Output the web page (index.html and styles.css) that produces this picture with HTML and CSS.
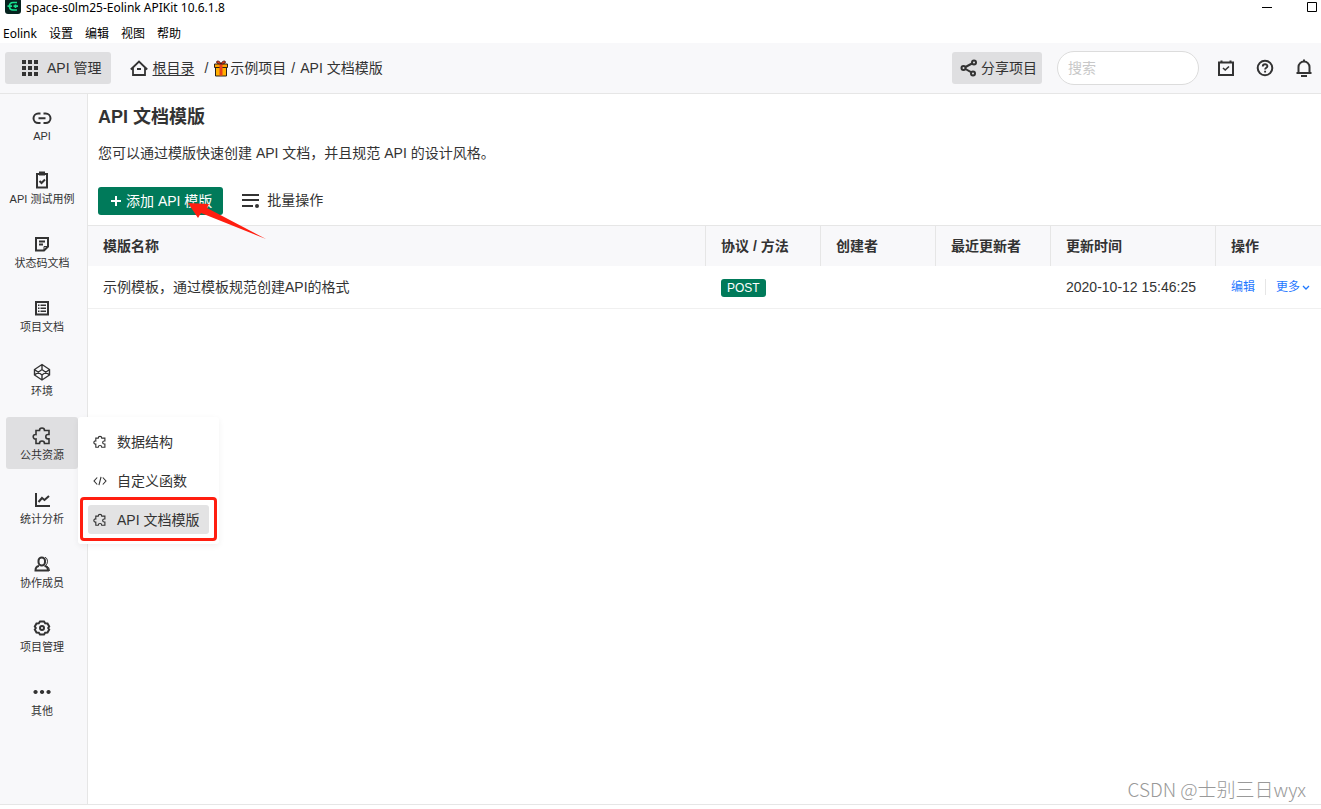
FILE: index.html
```html
<!DOCTYPE html>
<html lang="zh-CN">
<head>
<meta charset="utf-8">
<title>Eolink APIKit</title>
<link rel="stylesheet" href="styles.css">
</head>
<body>
<svg class="sprite" aria-hidden="true">
  <symbol id="puzzle" viewBox="0 0 20 20"><path d="M4 4.500h3.500a2.500 2.500 0 1 1 5 0H17V8.500h-1a2.200 2.200 0 0 0 0 4.400h1V17.500h-4.500a2.500 2.500 0 0 0-5 0H4V13a2.300 2.300 0 1 1 0-4.500z" fill="none" stroke="currentColor" stroke-width="1.600"/></symbol>
</svg>
<header class="titlebar">
  <svg class="logo" viewBox="0 0 16 16" aria-hidden="true"><rect width="16" height="16" y="-2" rx="3" fill="#06231f"/><path d="M12 2.500H8Q4.500 2.500 4.500 6.200T8 10h4M2.500 6.200H7M8.500 6.200H13M10.500 4.500V8" fill="none" stroke="#19e08f" stroke-width="1.700"/></svg>
  <span class="window-title">space-s0lm25-Eolink APIKit 10.6.1.8</span>
  <div class="window-controls">
    <button class="window-button" aria-label="最小化"><svg width="12" height="12"><path d="M1 6.500h10" stroke="#000"/></svg></button>
    <button class="window-button" aria-label="最大化"><svg width="12" height="12"><path d="M1.500 1.500h9v9h-9z" fill="none" stroke="#000"/></svg></button>
  </div>
</header>
<nav class="menubar" aria-label="菜单">
  <button>Eolink</button><button>设置</button><button>编辑</button><button>视图</button><button>帮助</button>
</nav>
<div class="topbar">
  <button class="app-button"><svg width="18" height="18" fill="#333"><path d="M1 1h4v4H1zM7 1h4v4H7zM13 1h4v4h-4zM1 7h4v4H1zM7 7h4v4H7zM13 7h4v4h-4zM1 13h4v4H1zM7 13h4v4H7zM13 13h4v4h-4z"/></svg>API 管理</button>
  <nav class="breadcrumb" aria-label="路径">
    <svg width="18" height="18"><path d="M.8 10.500 9 2.500l8.200 8M3 9v7h12V9M7 10h4" fill="none" stroke="#333" stroke-width="1.800"/></svg>
    <a href="#root">根目录</a>
    <span class="slash">/</span>
    <svg class="gift" viewBox="0 0 14 17"><path d="M1.500 7h11v9h-11z" fill="#ffb000" stroke="#2a2018"/><path d="M.5 4h13v3.500H.5z" fill="#ffa300" stroke="#2a2018"/><path d="M5.500 4h3v11.500h-3z" fill="#e8401c"/><path d="M7 4C6 .5 2.500.5 2.500 2S5 4 7 4s4.500-.5 4.500-2S8 .5 7 4z" fill="#e8401c" stroke="#2a1010" stroke-width=".8"/></svg>
    <span>示例项目</span>
    <span class="divider">/</span>
    <span>API 文档模版</span>
  </nav>
  <button class="share-button"><svg width="18" height="18" fill="none" stroke="#333" stroke-width="2"><circle cx="3.500" cy="9" r="2"/><circle cx="14" cy="3.500" r="2"/><circle cx="13" cy="14.500" r="2"/><path d="m5.500 8 6.500-3.500M5.500 10l5.500 3.200"/></svg>分享项目</button>
  <input class="search" type="search" placeholder="搜索" aria-label="搜索">
  <div class="tools">
    <button aria-label="任务"><svg width="18" height="18" fill="none" stroke="#333" stroke-width="2"><path d="M2 3.500h14V16H2zM4.500 1.500v2M13.500 1.500v2"/><path d="m6 9 2.200 2 3.800-3.500" stroke-width="1.600"/></svg></button>
    <button aria-label="帮助"><svg width="18" height="18" fill="none" stroke="#333" stroke-width="2"><circle cx="9" cy="9" r="7.300"/><path d="M6.800 7.500c0-3 4.600-2.800 4.600-.3 0 1.600-2.300 1.500-2.300 3.300M9.100 11.800v1.600" stroke-width="1.900"/></svg></button>
    <button aria-label="通知"><svg width="18" height="18" fill="none" stroke="#333" stroke-width="2"><path d="M1.500 14h15M3.500 14V8a5.500 5.500 0 0 1 11 0v6M9 .5v2M6 17h6"/></svg></button>
  </div>
</div>
<div class="workspace">
  <nav class="sidebar" aria-label="项目导航">
    <a class="nav-item nav-item-short" href="#api"><svg viewBox="0 0 20 20"><path d="M8.500 5.500H6.300a4.800 4.800 0 0 0 0 9.600h2.200M11.500 5.500h2.200a4.800 4.800 0 0 1 0 9.600h-2.200M6.500 10.300h7"/></svg>API</a>
    <a class="nav-item" href="#cases"><svg viewBox="0 0 20 20"><path d="M5 4h10v13.500H5zM8 2.500h4v2H8zM7.500 11l2 2 3.500-3.500"/></svg>API 测试用例</a>
    <a class="nav-item" href="#codes"><svg viewBox="0 0 20 20"><path d="M4 4h12v8.500L12 16.500H4zM7 7.500h6M7 10.500h4"/><path d="M16 12.500h-4v4" stroke-width="1"/></svg>状态码文档</a>
    <a class="nav-item" href="#docs"><svg viewBox="0 0 20 20"><path d="M4 4h12v12.500H4z"/><path d="M6 7.200h1.500M8.500 7.200H14M6 10.200h1.500M8.500 10.200H14M6 13.200h1.500M8.500 13.200H14" stroke-width="1.600"/></svg>项目文档</a>
    <a class="nav-item" href="#env"><svg class="thin" viewBox="0 0 20 20"><path d="m10 2.500 7.500 5v5.500L10 18l-7.500-5V7.500zM10 2.500v5M10 13v5M2.500 7.500 10 13l7.500-5.500M2.500 13 10 7.500l7.500 5.500"/></svg>环境</a>
    <div class="nav-group">
      <a class="nav-item nav-item-active" href="#resources"><svg viewBox="0 0 20 20"><use href="#puzzle"/></svg>公共资源</a>
      <div class="submenu">
        <a href="#structures"><svg viewBox="0 0 20 20"><use href="#puzzle"/></svg>数据结构</a>
        <a href="#functions"><svg viewBox="0 0 20 20"><path d="m6 5-4.500 5L6 15M14 5l4.500 5-4.500 5M11.500 4l-3 12" fill="none" stroke="currentColor" stroke-width="1.600"/></svg>自定义函数</a>
        <a class="submenu-active" href="#templates"><svg viewBox="0 0 20 20"><use href="#puzzle"/></svg>API 文档模版</a>
      </div>
    </div>
    <a class="nav-item" href="#stats"><svg viewBox="0 0 20 20"><path d="M4 3v13h14M6.500 12 10 8l2.500 2L17 6"/></svg>统计分析</a>
    <a class="nav-item" href="#members"><svg viewBox="0 0 20 20"><rect x="6.500" y="3.500" width="6.500" height="8" rx="3.200"/><path d="M7 12q-3.500.5-3.500 4.500H16q0-4-3.500-4.500"/><path d="M13 3.200q2.500 1 2.500 4t-2 4.300M14.500 12q3 1 3 5" stroke-width="1"/></svg>协作成员</a>
    <a class="nav-item" href="#settings"><svg viewBox="0 0 20 20"><path d="M8 3.500h4l1.200 1.800 2.300.2 1.700 3-1 1.500 1 1.500-1.700 3-2.300.2L12 16.500H8l-1.200-1.800-2.300-.2-1.700-3 1-1.500-1-1.500 1.700-3 2.300-.2z"/><circle cx="10" cy="10" r="2"/></svg>项目管理</a>
    <a class="nav-item" href="#more"><svg viewBox="0 0 20 20"><path d="M3.500 7.900a2.100 2.100 0 1 0 .1 0zM10 7.900a2.100 2.100 0 1 0 .1 0zM16.500 7.900a2.100 2.100 0 1 0 .1 0z" fill="#333" stroke="none"/></svg>其他</a>
  </nav>
  <main class="content">
    <h1>API 文档模版</h1>
    <p class="description">您可以通过模版快速创建 API 文档，并且规范 API 的设计风格。</p>
    <div class="actions">
      <button class="add-button"><svg width="12" height="12"><path d="M6 1v10M1 6h10" stroke="#fff" stroke-width="2"/></svg>添加 API 模版</button>
      <button class="batch-button"><svg width="18" height="18"><path d="M0 4h17M0 9h17M0 15h11" stroke="#333" stroke-width="2"/><circle cx="15" cy="15" r="2" fill="#333"/></svg>批量操作</button>
      <svg class="pointer" viewBox="0 0 78 42" aria-hidden="true"><path d="M0 3 21 4l-2 4 59 31L13 13l-3 5z" fill="#ff1e10"/></svg>
    </div>
    <table class="templates">
      <thead><tr><th>模版名称</th><th class="col-small">协议 / 方法</th><th class="col-small">创建者</th><th class="col-small">最近更新者</th><th class="col-time">更新时间</th><th class="col-action">操作</th></tr></thead>
      <tbody><tr><td>示例模板，通过模板规范创建API的格式</td><td><span class="method">POST</span></td><td></td><td></td><td>2020-10-12 15:46:25</td><td><div class="row-actions"><a href="#edit">编辑</a><button>更多<svg width="8" height="8"><path d="m1 3 3 3 3-3" fill="none" stroke="currentColor" stroke-width="1.300"/></svg></button></div></td></tr></tbody>
    </table>
  </main>
  <div class="watermark">CSDN @士别三日wyx</div>
</div>
</body>
</html>
```
FILE: styles.css
```css
* { box-sizing: border-box; }
body {
  margin: 0;
  min-height: 100vh;
  padding-bottom: 4px;
  display: flex;
  flex-direction: column;
  background: #fff;
  color: #333;
  font: 14px/20px "Liberation Sans", "Noto Sans CJK SC", sans-serif;
}
button { border: 0; padding: 0; background: none; color: inherit; font: inherit; cursor: pointer; }
a { color: inherit; text-decoration: none; }
svg { flex: none; display: block; }
.sprite { position: absolute; width: 0; height: 0; }

.titlebar, .menubar { font: 12px/16px "Noto Sans", "Noto Sans CJK SC", sans-serif; color: #000; }
.titlebar { display: flex; height: 24px; padding: 0 3px 0 5px; }
.logo { width: 16px; height: 16px; margin-right: 5px; }
.window-controls { display: flex; gap: 33px; margin-left: auto; padding-top: 1px; }
.window-button { height: 12px; }
.menubar { display: flex; gap: 12px; height: 19px; padding-left: 3px; }
.menubar button { height: 19px; }

.topbar {
  display: flex;
  align-items: center;
  height: 51px;
  padding: 0 8px 0 5px;
  background: #f8f8fa;
  border-bottom: 1px solid #e6e6e6;
}
.app-button, .share-button { display: flex; align-items: center; height: 32px; background: #dfdfe1; border-radius: 3px; }
.app-button { gap: 8px; padding: 0 10px 0 16px; }
.share-button { gap: 3px; padding: 0 5px 0 8px; margin-left: auto; }
.breadcrumb { display: flex; align-items: center; margin-left: 19px; }
.breadcrumb a { margin-left: 4px; text-decoration: underline; text-underline-offset: 2px; }
.slash { margin: 0 6px 0 10px; }
.gift { width: 14px; height: 17px; margin-right: 2px; }
.divider { margin: 0 5px; }
.search {
  width: 142px;
  height: 34px;
  margin: 0 18px 0 15px;
  padding: 0 10px;
  border: 1px solid #dcdcdc;
  border-radius: 17px;
  background: #fff;
  font: inherit;
}
.search::placeholder { color: #c8c8c8; opacity: 1; }
.tools { display: flex; gap: 21px; }

.workspace { position: relative; flex: 1; display: flex; border-bottom: 1px solid #e6e6e6; }
.sidebar {
  display: flex;
  flex-direction: column;
  gap: 12px;
  width: 88px;
  padding: 5px 9px 12px 6px;
  background: #f8f8fa;
  border-right: 1px solid #e6e6e6;
}
.nav-item {
  display: flex;
  flex-direction: column;
  align-items: center;
  gap: 1px;
  height: 52px;
  padding-top: 9px;
  border-radius: 3px;
  font-size: 11px;
  line-height: 16px;
  white-space: nowrap;
}
.nav-item-short { height: 50px; gap: 0; }
.nav-item-active { background: #dfdfe1; }
.nav-item svg { width: 20px; height: 20px; fill: none; stroke: #333; stroke-width: 2; }
.nav-item .thin { stroke-width: 1.4; }
.nav-group { position: relative; }
.submenu {
  position: absolute;
  z-index: 2;
  top: 0;
  left: 72px;
  display: flex;
  flex-direction: column;
  gap: 10px;
  width: 141px;
  padding: 10px;
  border-radius: 3px;
  background: #fff;
  box-shadow: 0 2px 6px rgba(0, 0, 0, .06);
}
.submenu a { position: relative; display: flex; align-items: center; gap: 10px; height: 29px; padding-left: 5px; border-radius: 3px; white-space: nowrap; }
.submenu svg { width: 14px; height: 14px; }
.submenu .submenu-active { background: #e3e3e4; }
.submenu-active::after { content: ""; position: absolute; inset: -8px -8px -7px; border: 3px solid #ff1e10; border-radius: 4px; }

.content { flex: 1; min-width: 0; padding-top: 10px; }
h1 { margin: 0 10px; font-size: 18px; line-height: 26px; }
.description { margin: 13px 10px 24px; }
.actions { position: relative; display: flex; gap: 19px; padding: 0 10px 10px; }
.add-button { display: flex; align-items: center; gap: 4px; height: 28px; padding: 0 11px 0 12px; border-radius: 3px; background: #007a5a; color: #fff; }
.batch-button { display: flex; align-items: center; gap: 7px; height: 26px; }
.pointer { position: absolute; left: 100px; top: 13px; width: 78px; height: 42px; z-index: 1; }

.templates { width: 100%; table-layout: fixed; border-spacing: 0; border-top: 1px solid #e6e6e6; }
th { height: 40px; padding: 0 15px; background: #f8f8fa; text-align: left; }
th + th { border-left: 1px solid #e6e6e6; }
td { height: 43px; padding: 0 15px; border-bottom: 1px solid #f0f0f0; }
td + td { padding-left: 16px; }
.col-small { width: 115px; }
.col-time { width: 165px; }
.col-action { width: 106px; }
td:last-child { padding-right: 0; }
.method { display: inline-block; padding: 0 6px; border-radius: 3px; background: #007a5a; color: #fff; font-size: 12px; line-height: 18px; }
.row-actions { display: flex; align-items: center; color: #1f78ff; font-size: 12px; line-height: 16px; }
.row-actions button { display: flex; align-items: center; gap: 2px; margin-left: 10px; padding-left: 10px; border-left: 1px solid #e6e6e6; }
.watermark { position: absolute; right: 15px; bottom: 0; color: #999; font: 19px/30px "Liberation Sans", "Noto Sans CJK SC", sans-serif; font-family: "Noto Sans CJK SC", sans-serif; font-weight: 300; }
```
